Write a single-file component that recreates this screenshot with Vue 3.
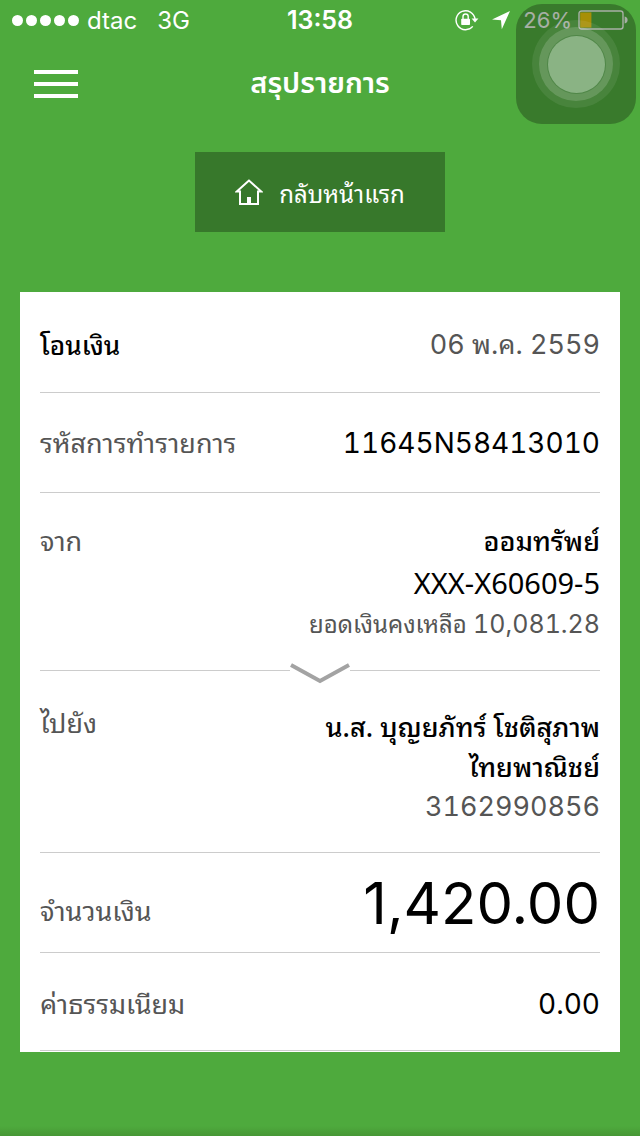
<template>
  <div class="page">
    <div class="status-bar">
      <div class="status-left">
        <div class="signal">
          <span v-for="n in 5" :key="n" class="dot"></span>
        </div>
        <span>dtac</span>
        <span class="network">3G</span>
      </div>
      <div class="clock">13:58</div>
      <div class="status-right">
        <svg class="icon-lock" viewBox="0 0 24 22" aria-hidden="true">
          <path d="M17.8 17.4A9.5 9.5 0 1 1 20 10" fill="none" stroke="#fff" stroke-width="1.4" />
          <path d="M16.6 9.4h6.8L20 13.4z" fill="#fff" />
          <rect x="6.2" y="9.8" width="8.8" height="6.2" rx="0.8" fill="#fff" />
          <path d="M8 10V7.6a2.6 2.6 0 0 1 5.2 0V10" fill="none" stroke="#fff" stroke-width="1.4" />
        </svg>
        <svg class="icon-location" viewBox="0 0 20 20" aria-hidden="true">
          <path d="M19 1L1 9.6l9 .6.8 9z" fill="#fff" />
        </svg>
        <span class="percent">26%</span>
        <svg class="icon-battery" viewBox="0 0 50 20" aria-hidden="true">
          <rect x="1" y="1" width="44" height="18" rx="2.5" fill="none" stroke="#fff" stroke-width="1.4" />
          <rect x="2.2" y="2.4" width="11.2" height="15.2" fill="#ffcc00" />
          <path d="M46.6 6.5q3 .8 3 3.5t-3 3.5z" fill="#fff" />
        </svg>
      </div>
    </div>

    <header class="nav-bar">
      <button class="menu-btn" type="button" aria-label="เมนู" @click="menuOpen = !menuOpen">
        <span></span>
        <span></span>
        <span></span>
      </button>
      <h1>สรุปรายการ</h1>
    </header>

    <a class="home-btn" href="#">
      <svg class="icon-home" viewBox="0 0 28 26" aria-hidden="true">
        <path
          d="M14 1.6L1.8 12.4H5V25H23V12.4h3.2z"
          fill="none"
          stroke="#fff"
          stroke-width="2"
        />
        <rect x="12" y="18" width="4" height="7" fill="#fff" />
      </svg>
      <span>กลับหน้าแรก</span>
    </a>

    <main class="card">
      <section class="row row-date">
        <h2 class="title">โอนเงิน</h2>
        <div class="value muted">06 พ.ค. 2559</div>
      </section>

      <section class="row">
        <div class="label">รหัสการทำรายการ</div>
        <div class="value">11645N58413010</div>
      </section>

      <section class="row row-from">
        <div class="label">จาก</div>
        <div class="lines">
          <div class="name">{{ from.type }}</div>
          <div class="account">{{ from.account }}</div>
          <div class="balance">ยอดเงินคงเหลือ <span>{{ from.balance }}</span></div>
        </div>
        <svg class="arrow" viewBox="0 0 60 22" aria-hidden="true">
          <path d="M1 3l29 16L59 3" fill="none" stroke="#a3a3a3" stroke-width="4" />
        </svg>
      </section>

      <section class="row row-to">
        <div class="label">ไปยัง</div>
        <div class="lines">
          <div class="name">{{ to.name }}</div>
          <div class="name">{{ to.bank }}</div>
          <div class="value muted">{{ to.account }}</div>
        </div>
      </section>

      <section class="row row-amount">
        <div class="label">จำนวนเงิน</div>
        <div class="amount">1,420.00</div>
      </section>

      <section class="row row-fee">
        <div class="label">ค่าธรรมเนียม</div>
        <div class="value">0.00</div>
      </section>
    </main>

    <div class="assistive">
      <div class="ring">
        <div class="ring-inner">
          <div class="knob"></div>
        </div>
      </div>
    </div>
  </div>
</template>

<script setup>
import { ref } from 'vue'

const menuOpen = ref(false)

const from = {
  type: 'ออมทรัพย์',
  account: 'XXX-X60609-5',
  balance: '10,081.28'
}

const to = {
  name: 'น.ส. บุญยภัทร์ โชติสุภาพ',
  bank: 'ไทยพาณิชย์',
  account: '3162990856'
}
</script>

<style>
body {
  background: #4eaa3d;
}
</style>

<style scoped>
.page {
  position: relative;
  box-sizing: border-box;
  min-height: 100vh;
  background: linear-gradient(to top, #479735 0, #4eaa3d 10px);
  font-family: "Noto Sans", "Noto Sans Thai Looped", "Noto Sans Thai", sans-serif;
  color: #000;
}

.status-bar {
  display: grid;
  grid-template-columns: 1fr auto 1fr;
  align-items: center;
  height: 40px;
  padding: 0 12px;
  color: #fff;
  font-family: Inter, sans-serif;
  font-size: 24px;
}

.status-left {
  display: flex;
  align-items: center;
  gap: 8px;
}

.signal {
  display: flex;
  gap: 3px;
}

.dot {
  width: 11px;
  height: 11px;
  border-radius: 50%;
  background: #fff;
}

.network {
  margin-left: 12px;
}

.clock {
  font-size: 25px;
  font-weight: 600;
}

.status-right {
  display: flex;
  align-items: center;
  justify-content: flex-end;
}

.icon-lock {
  width: 24px;
  height: 22px;
  margin-right: 12px;
}

.icon-location {
  width: 20px;
  height: 20px;
  margin-right: 12px;
}

.percent {
  margin-right: 6px;
  font-size: 22px;
}

.icon-battery {
  width: 50px;
  height: 20px;
}

.nav-bar {
  display: grid;
  grid-template-columns: 1fr auto 1fr;
  align-items: center;
  height: 88px;
  padding: 0 34px;
}

.menu-btn {
  display: flex;
  flex-direction: column;
  gap: 8px;
  width: 44px;
  padding: 0;
  border: none;
  background: none;
  cursor: pointer;
}

.menu-btn span {
  height: 4px;
  background: #fff;
}

.nav-bar h1 {
  margin: 0;
  color: #fff;
  font-family: "Noto Sans", "Noto Sans Thai", sans-serif;
  font-size: 29px;
  font-weight: 600;
}

.home-btn {
  display: flex;
  align-items: center;
  justify-content: center;
  gap: 16px;
  width: 250px;
  height: 80px;
  margin: 24px auto 60px;
  background: #37782b;
  color: #fff;
  font-size: 24px;
  text-decoration: none;
}

.icon-home {
  width: 28px;
  height: 26px;
}

.card {
  margin: 0 20px;
  padding: 1px 20px;
  background: #fff;
}

.row {
  position: relative;
  display: flex;
  justify-content: space-between;
  align-items: center;
  box-sizing: border-box;
  min-height: 100px;
  border-bottom: 1px solid #ccc;
}

.row-date {
  padding-top: 4px;
}

.row-fee {
  min-height: 98px;
  padding-top: 4px;
}

.title {
  margin: 0;
  font-size: 26px;
  font-weight: 500;
  line-height: 40px;
}

.label {
  color: #555;
  font-size: 27px;
  line-height: 40px;
}

.value {
  font-family: Inter, "Noto Sans", "Noto Sans Thai Looped", sans-serif;
  font-size: 28px;
  font-variant-numeric: tabular-nums;
  line-height: 40px;
}

.muted {
  color: #555;
  font-size: 27px;
}

.row-from,
.row-to {
  align-items: flex-start;
}

.row-from {
  padding: 28px 0 27px;
}

.row-to {
  padding: 32px 0 25px;
}

.lines {
  text-align: right;
}

.row-to .lines {
  padding-top: 4px;
}

.name {
  font-size: 27px;
  font-weight: 500;
  line-height: 40px;
}

.account {
  font-size: 29px;
  line-height: 44px;
}

.balance {
  color: #555;
  font-size: 24px;
  line-height: 37px;
}

.balance span {
  font-family: Inter, sans-serif;
  font-size: 25px;
  font-variant-numeric: tabular-nums;
}

.arrow {
  position: absolute;
  bottom: -14px;
  left: 50%;
  width: 60px;
  height: 22px;
  margin-left: -30px;
  background: #fff;
}

.row-amount .label {
  padding-top: 16px;
}

.amount {
  font-family: Inter, sans-serif;
  font-size: 58px;
  line-height: 72px;
}

.assistive {
  position: absolute;
  top: 4px;
  right: 4px;
  display: flex;
  align-items: center;
  justify-content: center;
  width: 120px;
  height: 120px;
  border-radius: 26px;
  background: rgba(23, 44, 19, 0.38);
}

.ring,
.ring-inner,
.knob {
  display: flex;
  align-items: center;
  justify-content: center;
  border-radius: 50%;
}

.ring {
  width: 88px;
  height: 88px;
  background: rgba(255, 255, 255, 0.08);
}

.ring-inner {
  width: 74px;
  height: 74px;
  background: rgba(255, 255, 255, 0.16);
}

.knob {
  width: 57px;
  height: 57px;
  background: #8ab384;
  box-shadow: 0 0 0 1px #508748;
}
</style>
